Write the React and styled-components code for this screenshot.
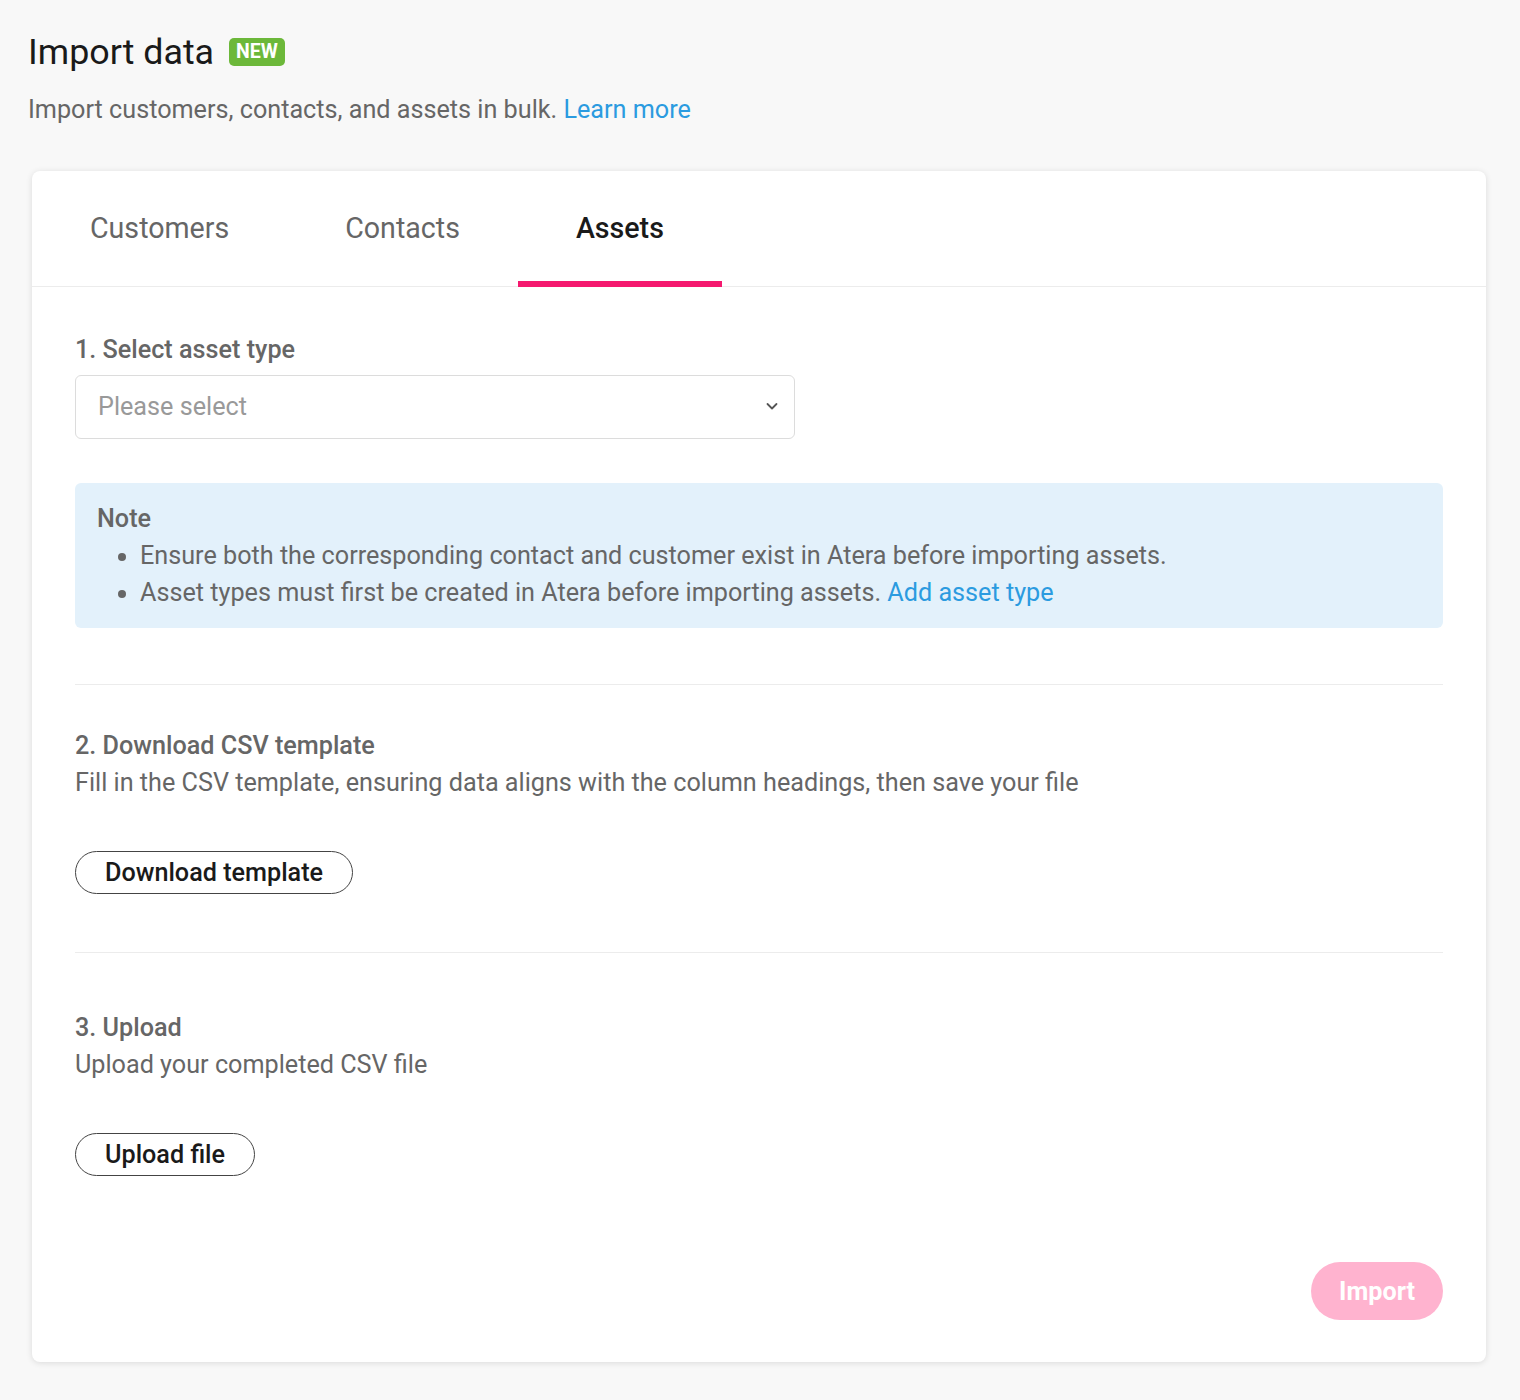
import React from "react"
import styled, { createGlobalStyle } from "styled-components"

const GlobalStyle = createGlobalStyle`
  * { box-sizing: border-box; }
  body {
    margin: 0;
    background: #f8f8f8;
    font-family: Roboto, "Liberation Sans", sans-serif;
    color: #666;
  }
`

const tabs = ["Customers", "Contacts", "Assets"]

const App = () => {
  return (
    <>
      <GlobalStyle />
      <Page>
        <TitleRow>
          <Title>Import data</Title>
          <Badge>NEW</Badge>
        </TitleRow>
        <Subtitle>
          Import customers, contacts, and assets in bulk. <Link href="#">Learn more</Link>
        </Subtitle>

        <Card>
          <TabBar>
            {tabs.map((t) => (
              <Tab key={t} $active={t === "Assets"}>{t}</Tab>
            ))}
          </TabBar>

          <Body>
            <Section $top={44}>
              <Heading>1. Select asset type</Heading>
              <Select>
                <Placeholder>Please select</Placeholder>
                <svg width="14" height="14" viewBox="0 0 14 14">
                  <path d="M2.5 5 L7 9.5 L11.5 5" fill="none" stroke="#555" strokeWidth="1.8" strokeLinecap="round" strokeLinejoin="round" />
                </svg>
              </Select>
              <Note>
                <NoteTitle>Note</NoteTitle>
                <NoteList>
                  <li>Ensure both the corresponding contact and customer exist in Atera before importing assets.</li>
                  <li>
                    Asset types must first be created in Atera before importing assets. <Link href="#">Add asset type</Link>
                  </li>
                </NoteList>
              </Note>
            </Section>

            <Divider $top={56} />

            <Section $top={42}>
              <Heading>2. Download CSV template</Heading>
              <Text>Fill in the CSV template, ensuring data aligns with the column headings, then save your file</Text>
              <OutlineButton>Download template</OutlineButton>
            </Section>

            <Divider $top={58} />

            <Section $top={56}>
              <Heading>3. Upload</Heading>
              <Text>Upload your completed CSV file</Text>
              <OutlineButton>Upload file</OutlineButton>
            </Section>

            <Footer>
              <ImportButton disabled>Import</ImportButton>
            </Footer>
          </Body>
        </Card>
      </Page>
    </>
  )
}

export default App

/* ── Styled Components ── */

const Page = styled.div`
  padding: 30px 34px 38px 28px;
`

const TitleRow = styled.div`
  display: flex;
  align-items: center;
  gap: 15px;
`

const Title = styled.h1`
  margin: 0;
  font-size: 35.8px;
  font-weight: 400;
  line-height: 44px;
  color: #1a1a1a;
`

const Badge = styled.span`
  background: #6cb83a;
  color: #fff;
  font-size: 19.5px;
  font-weight: 700;
  line-height: 28px;
  padding: 0 7px;
  border-radius: 5px;
`

const Subtitle = styled.p`
  margin: 20px 0 0;
  font-size: 25.2px;
  line-height: 32px;
  color: #666;
`

const Link = styled.a`
  color: #2b9be0;
  text-decoration: none;
`

const Card = styled.div`
  margin: 45px 0 0 4px;
  background: #fff;
  border-radius: 8px;
  box-shadow: 0 1px 6px rgba(0, 0, 0, 0.12);
`

const TabBar = styled.div`
  display: flex;
  height: 116px;
  border-bottom: 1px solid #ececec;
`

const Tab = styled.div`
  display: flex;
  align-items: center;
  padding: 4px 58px 0;
  font-size: 28.6px;
  font-weight: ${(p) => (p.$active ? 500 : 400)};
  color: ${(p) => (p.$active ? "#1a1a1a" : "#666")};
  border-bottom: 6px solid ${(p) => (p.$active ? "#f5196f" : "transparent")};
  margin-bottom: -1px;
`

const Body = styled.div`
  padding: 0 43px 42px;
`

const Section = styled.div`
  padding-top: ${(p) => p.$top}px;
`

const Heading = styled.h3`
  margin: 0;
  font-size: 25.2px;
  font-weight: 500;
  line-height: 37px;
  color: #666;
`

const Text = styled.p`
  margin: 0;
  font-size: 25.2px;
  line-height: 37px;
  color: #666;
`

const Select = styled.div`
  margin-top: 7px;
  width: 720px;
  height: 64px;
  border: 1px solid #dcdcdc;
  border-radius: 6px;
  display: flex;
  align-items: center;
  justify-content: space-between;
  padding: 0 15px 2px 22px;
`

const Placeholder = styled.span`
  font-size: 25.2px;
  color: #999;
`

const Note = styled.div`
  margin-top: 44px;
  background: #e3f1fb;
  border-radius: 6px;
  padding: 17px 22px 17px;
`

const NoteTitle = styled.div`
  font-size: 25.2px;
  font-weight: 500;
  line-height: 37px;
  color: #666;
`

const NoteList = styled.ul`
  margin: 0;
  padding-left: 43px;
  font-size: 25.2px;
  line-height: 37px;
  color: #666;
`

const Divider = styled.hr`
  margin: ${(p) => p.$top}px 0 0;
  border: none;
  border-top: 1px solid #ececec;
`

const OutlineButton = styled.button`
  margin-top: 50px;
  height: 43px;
  padding: 0 29px;
  border: 1px solid #444;
  border-radius: 22px;
  background: #fff;
  font-family: Roboto, "Liberation Sans", sans-serif;
  font-size: 25.2px;
  font-weight: 500;
  color: #1a1a1a;
  cursor: pointer;
`

const Footer = styled.div`
  display: flex;
  justify-content: flex-end;
  margin-top: 86px;
`

const ImportButton = styled.button`
  height: 58px;
  padding: 0 28px;
  border: none;
  border-radius: 29px;
  background: #ffb3cf;
  color: #fff;
  font-family: Roboto, "Liberation Sans", sans-serif;
  font-size: 25.2px;
  font-weight: 700;
`
